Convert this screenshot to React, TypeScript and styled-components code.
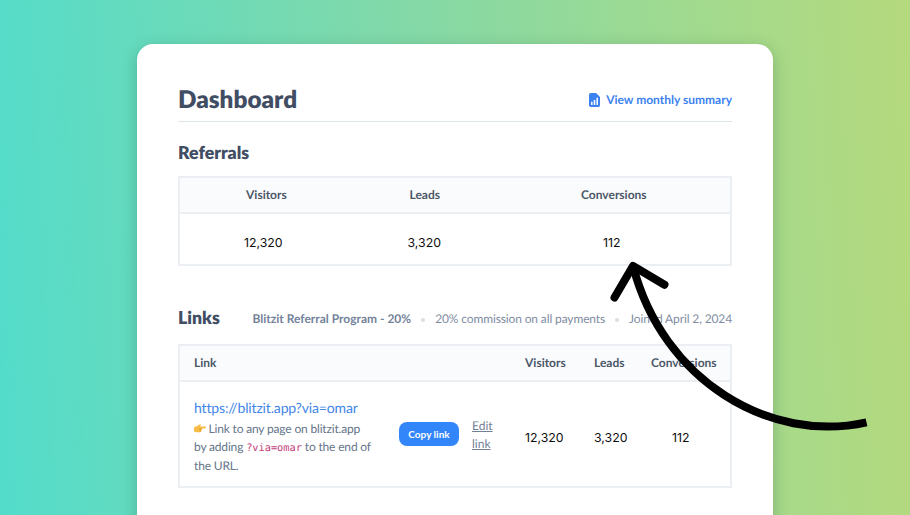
import React from "react";
import styled, { createGlobalStyle } from "styled-components";

const Global = createGlobalStyle`
  * { box-sizing: border-box; }
  body {
    margin: 0;
    overflow: hidden;
    font-family: Lato, "Liberation Sans", sans-serif;
    text-rendering: geometricPrecision;
  }
`;

const Stage = styled.main`
  position: relative;
  width: 910px;
  height: 515px;
  padding: 44px 137px 0;
  overflow: hidden;
  background: linear-gradient(87deg, #53dccb 0%, #84d9a7 47%, #a4da8c 80%, #b5d97d 100%);
`;

const Card = styled.section`
  width: 636px;
  height: 540px;
  padding: 39px 41px 0 41px;
  border-radius: 16px;
  background: #fff;
  box-shadow: 0 4px 16px rgba(20, 70, 50, 0.28);
`;

const Header = styled.header`
  display: flex;
  align-items: center;
  justify-content: space-between;
  height: 39px;
  padding-bottom: 4px;
  border-bottom: 1px solid #dfe6ea;
`;

const Title = styled.h1`
  margin: 0;
  color: #414d63;
  font-size: 24.3px;
  line-height: 30px;
  font-weight: 800;
`;

const SummaryLink = styled.a`
  display: flex;
  align-items: center;
  gap: 6px;
  color: #3b82f0;
  font-size: 12px;
  line-height: 16px;
  font-weight: 700;
  white-space: nowrap;
`;

const Heading = styled.h2`
  margin: 0;
  padding-top: 1px;
  color: #414d63;
  font-size: 17.7px;
  line-height: 22px;
  font-weight: 800;
`;

const ReferralsHeading = styled(Heading)`
  margin: 19px 0 12px;
`;

const Table = styled.div`
  width: 554px;
  border: 2px solid #ebeff3;
`;

const Row = styled.div<{ $columns: string; $height: number; $head?: boolean }>`
  display: grid;
  grid-template-columns: ${(p) => p.$columns};
  align-items: center;
  height: ${(p) => p.$height}px;
  background: ${(p) => (p.$head ? "#fafbfd" : "#fff")};
  border-bottom: ${(p) => (p.$head ? "2px solid #ebeff3" : "0")};
`;

const HeadCell = styled.div`
  color: #4b5768;
  font-size: 12px;
  line-height: 16px;
  font-weight: 700;
  white-space: nowrap;
`;

const NumberCell = styled.div<{ $top?: number; $left?: number }>`
  padding-top: ${(p) => p.$top ?? 0}px;
  padding-left: ${(p) => p.$left ?? 0}px;
  color: #0b0b0b;
  font-family: Inter, sans-serif;
  font-size: 12.3px;
  line-height: 16px;
`;

const ReferralNumber = styled(NumberCell)`
  margin-left: -2px;
`;

const LinksHeader = styled.div`
  display: flex;
  align-items: center;
  justify-content: space-between;
  height: 22px;
  margin: 40px 0 16px;
`;

const Meta = styled.div`
  display: flex;
  align-items: center;
  padding-top: 4px;
  color: #7f8da3;
  font-size: 12px;
  line-height: 16px;
  letter-spacing: -0.13px;
  white-space: nowrap;
`;

const Program = styled.strong`
  color: #74839a;
  font-weight: 700;
  letter-spacing: 0;
`;

const Dot = styled.span`
  width: 4px;
  height: 4px;
  margin: 2px 10px 0;
  border-radius: 50%;
  background: #d9dfe7;
`;

const LinkInfo = styled.div`
  padding-top: 6px;
  color: #66758a;
  font-size: 12px;
  line-height: 18px;
  letter-spacing: -0.17px;
  white-space: nowrap;
`;

const Url = styled.div`
  margin: -2px 0 2px;
  color: #3f86e8;
  font-size: 14px;
  line-height: 20px;
  letter-spacing: -0.15px;
`;

const Code = styled.code`
  color: #c2417c;
  font-family: "DejaVu Sans Mono", monospace;
  font-size: 10.3px;
  letter-spacing: 0;
`;

const Hand = styled.svg`
  display: inline-block;
  margin-right: 2.5px;
  vertical-align: -1px;
`;

const CopyButton = styled.button`
  width: 60px;
  height: 24px;
  margin: 0 0 1px;
  padding: 0;
  border: 0;
  border-radius: 8px;
  background: #3385fa;
  color: #fff;
  font-family: inherit;
  font-size: 10px;
  font-weight: 700;
`;

const EditLink = styled.a`
  width: 24px;
  padding-top: 2px;
  color: #718096;
  font-size: 12px;
  line-height: 18px;
  text-decoration: underline;
`;

const Arrow = styled.svg`
  position: absolute;
  left: 0;
  top: 0;
  pointer-events: none;
`;

const referralColumns = "66px 163.5px 171.5px 1fr";
const linkColumns = "14px 205px 73px 53px 69px 57px 1fr";

function ReportIcon() {
  return (
    <svg width="11" height="14" viewBox="0 0 11 14">
      <path d="M2 0H7L11 4V12.2A1.8 1.8 0 0 1 9.2 14H1.8A1.8 1.8 0 0 1 0 12.2V2A2 2 0 0 1 2 0Z" fill="#3b82f0" />
      <path d="M2.8 8.8V12M5.5 7V12M8.2 4.8V12" stroke="#fff" strokeWidth="1.5" fill="none" />
    </svg>
  );
}

function PointingHand() {
  return (
    <Hand width="12" height="10" viewBox="0 0 12 10">
      <path d="M0 3.2 3.2 2 5.5.5Q7 0 6.8 1.3L6 2.5H11Q12 2.7 12 3.4T11 4.4H7.7Q8.3 5 7.6 5.7 8 6.6 7.2 7 7.3 8.2 6 8.3H2.5L0 7.5Z" fill="#f8bd45" />
      <path d="M5 4.5H7.8M5.2 5.8H7.5M5.2 7H7" stroke="#dd922d" strokeWidth=".5" fill="none" />
    </Hand>
  );
}

export default function App() {
  return (
    <>
      <Global />
      <Stage>
        <Card>
          <Header>
            <Title>Dashboard</Title>
            <SummaryLink>
              <ReportIcon />
              View monthly summary
            </SummaryLink>
          </Header>

          <ReferralsHeading>Referrals</ReferralsHeading>
          <Table>
            <Row $columns={referralColumns} $height={36} $head>
              <span />
              <HeadCell>Visitors</HeadCell>
              <HeadCell>Leads</HeadCell>
              <HeadCell>Conversions</HeadCell>
            </Row>
            <Row $columns={referralColumns} $height={50}>
              <span />
              <ReferralNumber $top={7}>12,320</ReferralNumber>
              <ReferralNumber $top={7}>3,320</ReferralNumber>
              <ReferralNumber $top={7} $left={24}>112</ReferralNumber>
            </Row>
          </Table>

          <LinksHeader>
            <Heading>Links</Heading>
            <Meta>
              <Program>Blitzit Referral Program - 20%</Program>
              <Dot />
              20% commission on all payments
              <Dot />
              Joined April 2, 2024
            </Meta>
          </LinksHeader>
          <Table>
            <Row $columns={linkColumns} $height={36} $head>
              <span />
              <HeadCell>Link</HeadCell>
              <span />
              <span />
              <HeadCell>Visitors</HeadCell>
              <HeadCell>Leads</HeadCell>
              <HeadCell>Conversions</HeadCell>
            </Row>
            <Row $columns={linkColumns} $height={104}>
              <span />
              <LinkInfo>
                <Url>https://blitzit.app?via=omar</Url>
                <PointingHand />
                Link to any page on blitzit.app
                <br />
                by adding <Code>?via=omar</Code> to the end of
                <br />
                the URL.
              </LinkInfo>
              <CopyButton>Copy link</CopyButton>
              <EditLink>Edit link</EditLink>
              <NumberCell $top={7}>12,320</NumberCell>
              <NumberCell $top={7}>3,320</NumberCell>
              <NumberCell $top={7} $left={21}>112</NumberCell>
            </Row>
          </Table>
        </Card>
        <Arrow width="910" height="515" viewBox="0 0 910 515" fill="none" stroke="#000" strokeWidth="8" strokeLinejoin="round">
          <path d="M866.5 422.3C770 444 663 381 633 266" />
          <path d="M614.5 297.5 633 266 664.5 284.7" strokeLinecap="round" />
        </Arrow>
      </Stage>
    </>
  );
}
